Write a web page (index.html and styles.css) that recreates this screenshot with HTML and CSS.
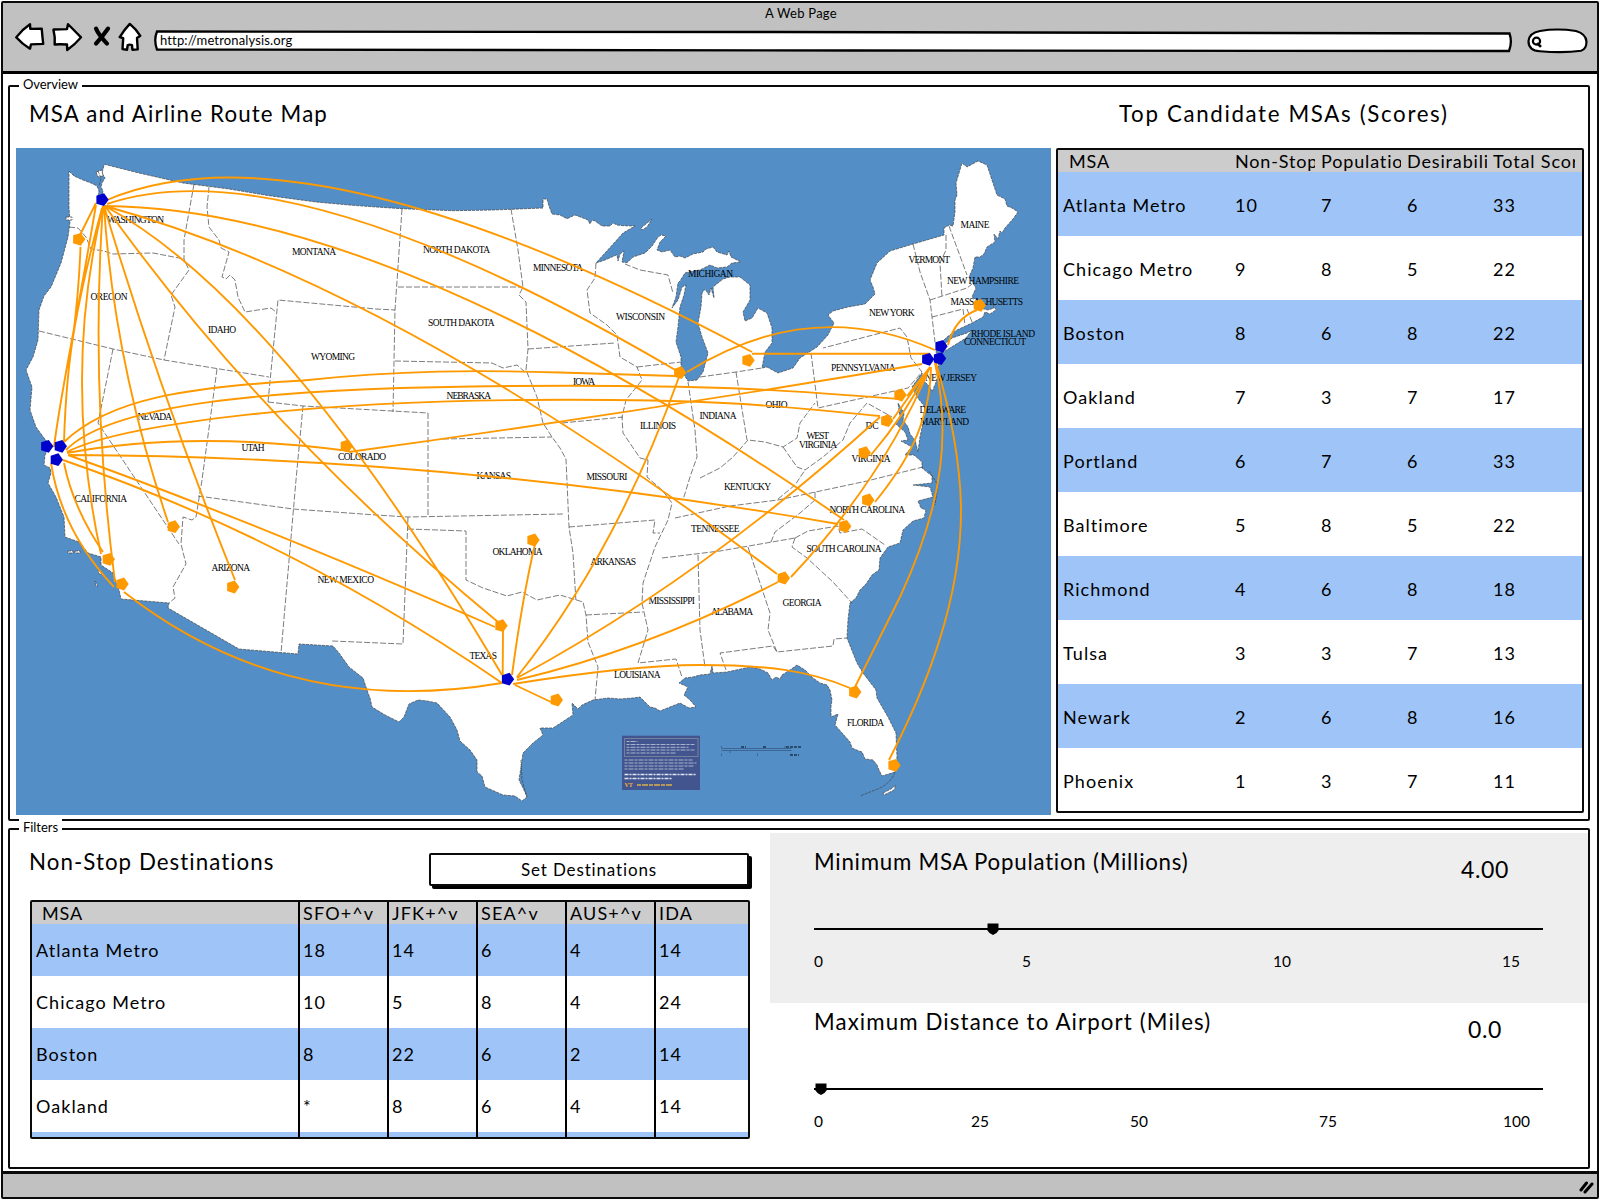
FILE: index.html
```html
<!DOCTYPE html>
<html lang="en">
<head>
<meta charset="utf-8">
<title>A Web Page</title>
<link rel="stylesheet" href="styles.css">
</head>
<body>
<div class="browser">
  <header class="chrome">
    <div class="chrome-title">A Web Page</div>
    <div class="toolbar">
      <svg class="nav-icons" viewBox="13 20 132 34" width="132" height="34">
        <g transform="scale(1 .968)">
        <g fill="#fff" stroke="#000" stroke-width="2.4" stroke-linejoin="round">
          <path d="M16.2 38.6Q22 30.500 30 25L30.300 29.800L41.700 29.600Q42.300 37 43.200 45.400L31 45.800L30 50.300Q22 45.500 16.200 38.600Z"/>
          <path d="M53.400 30.500Q60 30.500 67 30L68 25Q73 30 81 38.600Q75 46 67.200 51.600L67 46Q60 45.500 54.700 46Q55.300 38 53.400 30.500Z"/>
          <path d="M129.800 24.700Q136 30 140.300 37L137 39.300L137.700 51L132.400 51.400L132 46.500Q129.500 45.500 127.700 46.700L127 51.400L122.500 50.800L123.200 39.400L119.700 38.400Q124 31 129.800 24.700Z"/>
        </g>
        <path d="M96 29.500Q98.500 36 107 45M108 29.500Q103 37 96 45" fill="none" stroke="#000" stroke-width="4.200" stroke-linecap="round"/>
        </g>
      </svg>
      <div class="url">
        <svg class="sketch" viewBox="0 0 1359 24" width="1359" height="24"><path d="M3 1.500L620 2L1355.500 3.500Q1358.500 12 1355 21L700 20.500L3 19.500Q-0.500 10 3 1.500Z" fill="#fff" stroke="#000" stroke-width="2.300"/></svg>
        <span class="url-text">http://metronalysis.org</span>
      </div>
      <svg class="search" viewBox="1527 28 61 27" width="61" height="27">
        <g transform="scale(1 .968)">
        <path d="M1540 32Q1557 29 1576 32Q1586 35 1586.500 43Q1586.500 51 1581 52.500Q1564 55 1540 53Q1528.500 52 1528.500 42.500Q1529 34 1540 32Z" fill="#fff" stroke="#000" stroke-width="2.200"/>
        <circle cx="1536.500" cy="42.500" r="3.600" fill="none" stroke="#000" stroke-width="2.200"/>
        <path d="M1537 44.500L1541 48.500" stroke="#000" stroke-width="2.600"/>
        </g>
      </svg>
    </div>
  </header>

  <main class="content">
    <section class="group overview">
      <span class="legend">Overview</span>
      <div class="heads">
        <h2 class="h-map">MSA and Airline Route Map</h2>
        <h2 class="h-top">Top Candidate MSAs (Scores)</h2>
      </div>
      <div class="overview-row">
        <svg class="map" viewBox="16 148 1035 667" width="1035" height="667">
          <rect x="16" y="148" width="1035" height="667" fill="#538ec7"/>
          <g class="land">
            <path d="M69 171L74 176L83 180L91 183L97 186L99 191L98 196L101 199L103 191L101 187L102 183L105 178L102 173L104.300 164.300L139 173L183 183L229 189L269 195.700L316 202L349 205L376 207L402 208.700L453 210.700L493 210L543 208L543 199L547 199L549 206L552 214L560 215L567 218.700L575 215L583 218L588 220L590 224L592 220L595 221L602 226L610 226L613 223L617 225L623 225.700L635 226L623 233L615 242L605 253L596 263L605 260L617 254.700L618 261L620 254L624 251L622 262L627 262.700L633 257L645 253L652 246L658 237L661 235L666 236L660 242L657 250L662 252L670 250L675 257L680 256L685 258L693 254L703 252L706 249L713 247L717 252L727 255L729 251L731 257L741 262L732 263L727 267L717 268L710 265L700 270L693 271L685 273L680 281L678 283L676 297L672 308L678 300L682 287L686 285L684 295L680 307L678 327L676 342L681 357L681 370L688 381L697 380L703 372L708 353L702 337L698 323L701 307L702 293L705 289L709 295L711 288L714 298L713 287L723 279L730 277L740 277L750 285L750 300L743 312L745 321L752 318L758 308L767 313L772 328L772 343L765 352L762 368L767 367L778 373L793 368L800 358L817 347L828 335L834 323L828 315L833 311L848 307L865 304L875 294L873 287L870 280L877 263L890 251L913 244L944 235L944 228L949 225L953 226L955 212L955 200L957 195L956 183L962 163L967 167L978 161L987 165L992 180L997 195L1005 199L1007 206L1012 208L1018 212L1013 219L1005 228L1002 233L1000 231L998 239L994 234L995 242L987 247L984 254L980 257L975 257L973 268L969 277L976 288L972 297L977 300L980 308L988 310L994 308L993 304L996 310L990 314L985 312L983 317L972 323L957 330L947 337L940 344L936 352L939 360L938 370L937 380L932 392L930 387L923 380L922 373L912 387L917 397L925 407L923 423L920 437L918 452L915 440L910 434L908 427L903 420L904 413L898 403L900 417L896 424L905 432L908 440L901 441L912 447L905 455L914 455L922 462L922 468L932 476L932 483L913 485L930 487L933 497L918 501L921 508L926 510L924 518L913 521L903 530L900 543L894 545L888 547L880 558L879 570L872 575L866 584L860 590L856 598L850 603L848 620L847 638L857 663L863 673L876 690L877 698L888 717L896 733L897 757L895 772L882 776L879 770L877 765L873 760L865 759L862 752L859 751L852 748L850 742L835 725L838 714L831 717L831 706L832 700L830 690L827 685L820 683L813 678L805 670L797 665L790 670L782 675L780 679L776 677L772 680L768 673L760 669L750 667L727 672L713 673L712 666L710 674L700 675L693 677L685 678L679 683L688 687L684 695L690 700L696 707L689 708L680 703L670 707L660 711L655 708L650 707L640 697L633 698L620 699L608 698L593 700L582 705L578 709L572 703L573 715L553 728L540 728L543 735L533 743L523 753L521 767L519 780L524 790L527 797L522 801L515 796L503 795L485 787L482 776L477 772L477 760L470 750L460 741L457 730L450 717L437 703L427 701L418 700L409 704L404 717L399 722L385 715L372 707L370 698L368 693L363 678L349 667L339 653L333 646L299 644L298 654L239 649L168 608L169 603L121 599L119 590L113 573L101 565L101 557L88 553L79 542L65 537L64 517L56 497L48 483L51 473L50 468L44 465L45 455L50 445L44 438L36 427L30 410L32 387L26 370L33 357L38 340L39 310L44 296L51 287L61 263L68 237L70 222L69 207Z"/>
            <path d="M641 228L652 219L647 227L642 230ZM938 350L952 338L967 333L972 330L966 338L950 348L940 354ZM96 172L102 170L103 176L98 177ZM66 217h6v3h-6ZM68 551h5v2h-5ZM75 551h5v2h-5ZM98 569l4 5l-3 0ZM95 581l3 5l-2 0ZM883 793l8-4l5-4l-2 5l-10 5Z"/>
            <path class="keys" d="M895 772Q890 785 875 790L860 796M98 171L101 178L99 186M929 471L938 485L935 505M521 760L522 780L527 797"/>
          </g>
          <g class="states">
            <path d="M69 227L78 228L86 237L91 249L104 251L113 254L153 253L184 259M194 184L184 240L184 259L189 270L171 295L175 307L164 360M209 187L207 207L209 227L219 240L221 248L229 252L222 277L226 279L230 275L235 280L238 297L245 312L271 308L276 312M268 402L278 300L376 309L395 310M39 331L113 349L164 360L269 377M113 349L98 423L179 544M217 369L202 480L196 517L192 520L183 517L181 544L186 564L173 587L175 598L169 603M198 496L293 509L376 515L408 517L563 514M268 402L303 406L428 413M303 406L296 480L281 653M402 209L395 310L393 412M398 287L523 287M395 361L492 363L503 368L517 365L525 372M511 209L518 250L523 287L519 295L526 302L528 349L526 370L537 397L543 423L552 437L560 448L566 459L569 527L573 553L576 602M528 349L615 343M596 263L595 278L587 290L590 313L607 325L617 335L620 357L637 367L642 380L626 400L622 417L623 433L640 458L648 460L647 477L662 490L672 503L668 520L655 547L643 583L642 603L648 630L638 663L676 659L682 677M562 423L623 417M443 439L552 437M428 413L428 515M408 517L403 644L332 641M408 529L466 531L466 580L483 588L507 596L522 592L537 600L560 595L583 602L586 615L588 642L598 667L595 700M586 615L643 612M569 527L655 520L653 533L660 533M698 555L700 630L705 667M662 558L720 551L795 538M748 547L770 613L768 630L777 652M726 670L720 653L773 646L777 652L833 646L834 639L847 638M795 538L792 547L807 558L833 582L852 603M795 538L808 531L838 526L840 533L862 529L885 545M771 542L775 532L800 513L815 500L815 492M675 518L730 506L778 500L867 481L923 467M778 499L795 485L805 470M688 382L695 430L697 457L690 477L683 500M700 478L720 468L733 457L748 440L765 442L783 447L797 438L800 423L815 403M783 447L797 467L805 470L823 457L843 440L850 423L867 403L892 417M736 372L747 440M700 377L736 372L762 368M811 353L818 408L908 388L922 372L911 358L907 337L900 328L823 348M913 244L920 272L930 300L935 342M930 300L967 288L972 284M932 317L963 309L965 325M967 309L972 322M946 235L946 250L940 263L942 297M949 226L967 275M637 367L681 362M625 264L640 270L668 275L673 293"/>
          </g>
          <g class="names" transform="translate(0 .7)">
            <text x="107" y="222" textLength="57">WASHINGTON</text><text x="90.500" y="299.500" textLength="37">OREGON</text><text x="208" y="332.500" textLength="28">IDAHO</text><text x="292" y="254" textLength="44">MONTANA</text><text x="311" y="359" textLength="44">WYOMING</text><text x="137.500" y="419.500" textLength="34.500">NEVADA</text><text x="241.500" y="450" textLength="23">UTAH</text><text x="338" y="459" textLength="48">COLORADO</text><text x="423" y="252.500" textLength="67">NORTH DAKOTA</text><text x="428" y="325" textLength="66.500">SOUTH DAKOTA</text><text x="446.500" y="398.500" textLength="44.500">NEBRASKA</text><text x="533" y="270" textLength="50">MINNESOTA</text><text x="616" y="319" textLength="49">WISCONSIN</text><text x="573" y="384.500" textLength="22">IOWA</text><text x="640" y="428" textLength="36">ILLINOIS</text><text x="476.500" y="478" textLength="34.500">KANSAS</text><text x="586.500" y="479.500" textLength="41">MISSOURI</text><text x="688" y="276.500" textLength="45">MICHIGAN</text><text x="699.500" y="418.500" textLength="37">INDIANA</text><text x="765.500" y="407.500" textLength="22">OHIO</text><text x="831" y="370.500" textLength="64.500">PENNSYLVANIA</text><text x="869" y="315.500" textLength="45.500">NEW YORK</text><text x="908.500" y="262" textLength="41.500">VERMONT</text><text x="960.500" y="227" textLength="29">MAINE</text><text x="947" y="283.500" textLength="72">NEW HAMPSHIRE</text><text x="950.500" y="304.500" textLength="72.500">MASSACHUSETTS</text><text x="971" y="336" textLength="64">RHODE ISLAND</text><text x="964" y="344.500" textLength="62">CONNECTICUT</text><text x="925" y="380.500" textLength="52">NEW JERSEY</text><text x="919.500" y="412.500" textLength="46.500">DELAWARE</text><text x="920" y="424.500" textLength="49">MARYLAND</text><text x="865.500" y="428.500" textLength="13">DC</text><text x="806.500" y="438" textLength="22.500">WEST</text><text x="799" y="447.500" textLength="38">VIRGINIA</text><text x="851.500" y="461" textLength="39">VIRGINIA</text><text x="74.500" y="501" textLength="52.500">CALIFORNIA</text><text x="211.500" y="570.500" textLength="38.500">ARIZONA</text><text x="317.500" y="582.500" textLength="56.500">NEW MEXICO</text><text x="469.500" y="658.500" textLength="27.500">TEXAS</text><text x="492.500" y="554.500" textLength="50">OKLAHOMA</text><text x="590.500" y="564" textLength="45.500">ARKANSAS</text><text x="648.500" y="603.500" textLength="46.500">MISSISSIPPI</text><text x="614" y="677.500" textLength="46.500">LOUISIANA</text><text x="691" y="531.500" textLength="48.500">TENNESSEE</text><text x="724" y="489" textLength="47">KENTUCKY</text><text x="829.500" y="512.500" textLength="75.500">NORTH CAROLINA</text><text x="806.500" y="551" textLength="75">SOUTH CAROLINA</text><text x="782.500" y="605" textLength="39">GEORGIA</text><text x="711" y="614" textLength="42">ALABAMA</text><text x="847" y="725" textLength="37">FLORIDA</text>
          </g>
          <g class="note">
            <rect x="622" y="735.700" width="78" height="54.300" fill="#43558f"/>
            <rect x="624.500" y="738.500" width="73.500" height="18" fill="none" stroke="#75809f"/>
            <path d="M626.500 741.500h11M626.500 744.500h68M626.500 747.300h62M626.500 750h68M626.500 753h50M624.500 760h68M624.500 763h72M624.500 766h70M624.500 769h60" stroke="#a9b3cf" stroke-width="1" stroke-dasharray="3 1 5 1"/>
            <path d="M624.500 774.500h72M624.500 778.500h47" stroke="#dfe5f2" stroke-width="1.600" stroke-dasharray="4 1 2 1"/>
            <path d="M637 785h36" stroke="#d9b04e" stroke-width="1.400" stroke-dasharray="4 1 6 1"/>
            <text x="624.500" y="787">VT</text>
            <path d="M721.500 748.500h70M721.500 750.500h70M721.500 746v2M743.500 746v2M764.500 746v2M785 746v2M721.500 753.500v2.500M757.500 753.500v2.500M791 753.500v2.500M730 750v3" stroke="#3a6595" fill="none"/>
            <path d="M786 747h15M790 755h9M741 747h5M763 747h4" stroke="#1f3854" stroke-width="1.600" stroke-dasharray="3 1"/>
          </g>
          <g class="routes">
            <path d="M107 200Q308 115 752 352M107 204Q288 143 677 371M105 206Q395 208 844 520M105 206Q395 286 777 574M105 206Q283 303 502 675M105 206Q265 430 498 622M104 206Q160 393 235 580M104 206Q114 362 168 522M103 206Q90 390 115 582M103 206Q62 375 101 554M96 205Q84 275 71 345T54 447M102 208Q84 275 75 325T64 442M96 203L80 235M80.500 247Q79 290 73 337"/>
            <path d="M64 442C110 398 190 387 303 380.500C400 370 480 370 560 372.500L675 376M66 450C110 405 260 388 510 386S820 394 900 399M67 452C120 425 300 402 520 400S800 409 880 416M67 453Q190 430 349 451M349 452Q640 412 922 364M69 455Q452 456.500 838 524M68 455Q250 520 495 627M63 460Q295.500 540.500 502 683M64 463Q73 508 103 552M51 463Q61.500 531 114 587M124 592Q287 719.500 502 683"/>
            <path d="M503 630L502.700 675M535 544Q522 600 512 675M517 677Q616 553 679 377M517 678Q704 577 880 417M517 680Q648 649 778 582M513 684C600 670 660 665 700 665C770 665 810 671 850 688M515 685L551 702"/>
            <path d="M687 372Q811 295 935 350M752 353.700L930 353.700M948 345Q955 318 977 310M930 367L907 396M930 367L893 419M930 367Q905 415 871 455M930 367Q884 478 791 577M931 367C930 425 905 465 875 502M935 363C950 430 945 500 900 597L855 687M936 363C950 410 960 460 961 507C962 600 925 690 889 760"/>
          </g>
          <defs><path id="pin" d="M6.700 0L2.100 6.400L-5.600 4L-5.600 -4L2.100 -6.400Z"/></defs>
          <g fill="#f90">
            <use href="#pin" x="78.700" y="239.300"/><use href="#pin" x="346.300" y="446"/><use href="#pin" x="679.700" y="372.700"/><use href="#pin" x="748" y="360.300"/><use href="#pin" x="979.300" y="305.300"/><use href="#pin" x="900" y="395"/><use href="#pin" x="886.700" y="420.700"/><use href="#pin" x="864.300" y="452.700"/><use href="#pin" x="173.300" y="526.700"/><use href="#pin" x="108.300" y="559.300"/><use href="#pin" x="122" y="584"/><use href="#pin" x="232.700" y="587"/><use href="#pin" x="533" y="540"/><use href="#pin" x="501" y="625.700"/><use href="#pin" x="556.300" y="700"/><use href="#pin" x="867.700" y="500"/><use href="#pin" x="844.700" y="526.300"/><use href="#pin" x="783.300" y="578"/><use href="#pin" x="854.700" y="692"/><use href="#pin" x="894" y="765.300"/>
          </g>
          <g fill="#0000cd">
            <use href="#pin" x="102" y="199.700"/><use href="#pin" x="46.700" y="446.300"/><use href="#pin" x="60.300" y="446.300"/><use href="#pin" x="56.300" y="459.700"/><use href="#pin" x="507.500" y="679.200"/><use href="#pin" x="941" y="346.300"/><use href="#pin" x="927.700" y="359.300"/><use href="#pin" x="939.500" y="358.500"/>
          </g>
        </svg>

        <div class="table scores">
          <div class="tr th"><span>MSA</span><span>Non-Stops</span><span>Population</span><span>Desirability</span><span>Total Score</span></div>
          <div class="tr"><span>Atlanta Metro</span><span>10</span><span>7</span><span>6</span><span>33</span></div>
          <div class="tr"><span>Chicago Metro</span><span>9</span><span>8</span><span>5</span><span>22</span></div>
          <div class="tr"><span>Boston</span><span>8</span><span>6</span><span>8</span><span>22</span></div>
          <div class="tr"><span>Oakland</span><span>7</span><span>3</span><span>7</span><span>17</span></div>
          <div class="tr"><span>Portland</span><span>6</span><span>7</span><span>6</span><span>33</span></div>
          <div class="tr"><span>Baltimore</span><span>5</span><span>8</span><span>5</span><span>22</span></div>
          <div class="tr"><span>Richmond</span><span>4</span><span>6</span><span>8</span><span>18</span></div>
          <div class="tr"><span>Tulsa</span><span>3</span><span>3</span><span>7</span><span>13</span></div>
          <div class="tr"><span>Newark</span><span>2</span><span>6</span><span>8</span><span>16</span></div>
          <div class="tr"><span>Phoenix</span><span>1</span><span>3</span><span>7</span><span>11</span></div>
        </div>
      </div>
    </section>

    <section class="group filters">
      <span class="legend">Filters</span>
      <div class="dest">
        <div class="dest-head">
          <h2 class="h-dest">Non-Stop Destinations</h2>
          <button class="set-btn" type="button">Set Destinations</button>
        </div>
        <div class="table nonstop">
          <div class="tr th"><span>MSA</span><span>SFO+^v</span><span>JFK+^v</span><span>SEA^v</span><span>AUS+^v</span><span>IDA</span></div>
          <div class="tr"><span>Atlanta Metro</span><span>18</span><span>14</span><span>6</span><span>4</span><span>14</span></div>
          <div class="tr"><span>Chicago Metro</span><span>10</span><span>5</span><span>8</span><span>4</span><span>24</span></div>
          <div class="tr"><span>Boston</span><span>8</span><span>22</span><span>6</span><span>2</span><span>14</span></div>
          <div class="tr"><span>Oakland</span><span>*</span><span>8</span><span>6</span><span>4</span><span>14</span></div>
          <div class="tr"><span></span><span></span><span></span><span></span><span></span><span></span></div>
        </div>
      </div>
      <div class="sliders">
        <div class="slider shaded">
          <div class="slider-head"><h2 class="h-pop">Minimum MSA Population (Millions)</h2><span class="value">4.00</span></div>
          <div class="track"><svg class="knob knob-pop" viewBox="0 0 12 12" width="12" height="12"><path d="M.5 .5H11.500V7.500Q10 10.500 6 12Q2 10.500 .5 7.500Z"/></svg></div>
          <div class="ticks ticks-pop"><span>0</span><span>5</span><span>10</span><span>15</span></div>
        </div>
        <div class="slider">
          <div class="slider-head"><h2 class="h-dist">Maximum Distance to Airport (Miles)</h2><span class="value">0.0</span></div>
          <div class="track"><svg class="knob" viewBox="0 0 12 12" width="12" height="12"><path d="M.5 .5H11.500V7.500Q10 10.500 6 12Q2 10.500 .5 7.500Z"/></svg></div>
          <div class="ticks ticks-dist"><span>0</span><span>25</span><span>50</span><span>75</span><span>100</span></div>
        </div>
      </div>
    </section>
  </main>

  <footer class="status">
    <svg viewBox="0 0 16 14" width="16" height="14"><path d="M2 9L7.500 2M6 11L13 3" stroke="#000" stroke-width="3" stroke-linecap="round"/></svg>
  </footer>
</div>
</body>
</html>
```
FILE: styles.css
```css
* { box-sizing: border-box; }
body {
  margin: 0;
  background: #fff;
  color: #000;
  font-family: Lato, "Open Sans", sans-serif;
}
h2 { margin: 0; font-size: 22.3px; font-weight: 400; line-height: 28px; white-space: nowrap; }

.browser {
  width: 1598px;
  height: 1198px;
  margin: 1px;
  border: 2px solid #0a0a0a;
  border-radius: 2px;
  display: flex;
  flex-direction: column;
  overflow: hidden;
}

.chrome {
  height: 71px;
  flex: none;
  background: #c1c1c1;
  border-bottom: 3px solid #000;
}
.chrome-title {
  height: 20px;
  padding-left: 2px;
  font-size: 13px;
  line-height: 21px;
  letter-spacing: .25px;
  text-align: center;
}
.toolbar { display: flex; align-items: flex-start; padding-left: 10px; }
.nav-icons { flex: none; margin-top: -3px; }
.url { position: relative; width: 1359px; height: 24px; margin: 7px 0 0 9px; flex: none; }
.sketch { position: absolute; left: 0; top: 0; }
.url-text {
  position: relative;
  display: block;
  padding-left: 6px;
  font-size: 13px;
  line-height: 21px;
  letter-spacing: .15px;
}
.search { flex: none; margin: 5px 0 0 14px; }

.content { flex: 1; padding: 11px 7px 0 5px; }
.group { position: relative; border: 2.5px solid #0a0a0a; border-radius: 2px; }
.legend {
  position: absolute;
  left: 9px;
  top: -12px;
  padding: 0 4px;
  background: #fff;
  font-size: 13px;
  line-height: 18px;
  letter-spacing: -.05px;
}
.overview { height: 736px; }
.heads { display: flex; height: 61px; padding: 13px 0 0 19px; }
.h-map { width: 1090px; letter-spacing: 1.15px; }
.h-top { letter-spacing: 1.65px; }
.overview-row { display: flex; padding-left: 6px; }
.map { flex: none; }

.land { fill: #fff; stroke: #444; stroke-width: .7; stroke-dasharray: 3 1; }
.land .keys { fill: none; }
.states { fill: none; stroke: #444; stroke-width: .7; stroke-dasharray: 6 2; }
.names { font: 9.5px "Liberation Serif", serif; }
.note text { font: bold 6px "Liberation Serif", serif; fill: #f0b23c; }
.routes { fill: none; stroke: #f90; stroke-width: 1.9; }

.table { border: 2.5px solid #0a0a0a; border-radius: 2px; font-size: 18px; letter-spacing: 1.05px; }
.tr { display: grid; }
.tr span { white-space: nowrap; overflow: hidden; }
.tr:nth-child(even) { background: #9fc5f8; }
.th { background: #ccc; }
.scores { width: 528px; height: 665px; margin-left: 5px; }
.scores .tr {
  height: 64px;
  line-height: 66px;
  grid-template-columns: 166px 80px 80px 80px 82px;
  column-gap: 6px;
  padding-left: 5px;
}
.scores .th { height: 22px; line-height: 23px; letter-spacing: .85px; }
.scores .th span:first-child { padding-left: 6px; }

.filters { display: flex; height: 341px; margin-top: 7px; }
.dest { width: 760px; }
.dest-head { display: flex; height: 70px; padding-left: 19px; }
.h-dest { width: 400px; padding-top: 18px; letter-spacing: 1.05px; }
.set-btn {
  width: 320px;
  height: 33px;
  margin-top: 23px;
  padding: 0;
  background: #fff;
  border: 2px solid #0a0a0a;
  border-radius: 2px;
  box-shadow: 3px 3px 0 #000;
  color: #000;
  font: 17px Lato, sans-serif;
  letter-spacing: .85px;
}
.nonstop { width: 720px; height: 239px; margin-left: 20px; overflow: hidden; }
.nonstop .tr { height: 52px; line-height: 53px; grid-template-columns: 268px 89px 89px 89px 89px 1fr; }
.nonstop .tr span { padding-left: 3px; border-right: 2px solid #000; }
.nonstop .tr span:first-child { padding-left: 4px; }
.nonstop .tr span:last-child { border-right: 0; }
.nonstop .th { height: 22px; line-height: 23px; letter-spacing: 1.15px; }
.nonstop .th span:first-child { padding-left: 10px; letter-spacing: .9px; }

.sliders { flex: 1; padding-top: 3px; }
.slider { height: 160px; padding-left: 44px; }
.shaded { height: 170px; background: #eee; }
.slider + .slider { margin-top: -10px; }
.slider-head { display: flex; height: 95px; padding-top: 15px; }
.shaded + .slider .slider-head { padding-top: 15px; }
.h-pop { width: 647px; letter-spacing: .75px; }
.h-dist { width: 654px; letter-spacing: 1.1px; }
.value { padding-top: 7px; font-size: 23px; line-height: 28px; letter-spacing: .6px; }
.track { position: relative; width: 729px; height: 2px; background: #000; }
.knob { position: absolute; left: 1px; top: -5px; }
.knob-pop { left: 173px; }
.ticks { display: grid; padding-top: 19px; font-size: 15.5px; line-height: 24px; }
.ticks-pop { grid-template-columns: 208px 251px 229px 60px; }
.ticks-dist { grid-template-columns: 157px 159px 189px 184px 60px; }

.status {
  height: 26px;
  flex: none;
  display: flex;
  justify-content: flex-end;
  padding: 7px 2px 0 0;
  background: #c1c1c1;
  border-top: 3px solid #0a0a0a;
}
```
